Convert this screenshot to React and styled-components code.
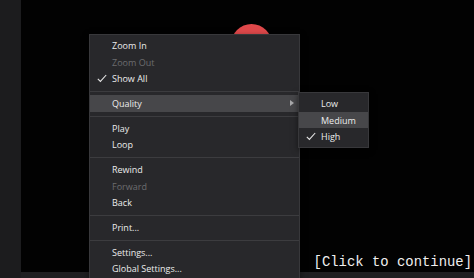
import styled, { createGlobalStyle } from "styled-components"

const GlobalStyle = createGlobalStyle`
  html, body {
    margin: 0;
    padding: 0;
    background: #1c1c1e;
    overflow: hidden;
  }
`

const Screen = styled.div`
  width: 474px;
  height: 278px;
  display: flex;
  position: relative;
  overflow: hidden;
  font-family: "Open Sans", "Noto Sans", sans-serif;
`
const SideStrip = styled.div`
  width: 21px;
  background: #1c1c1e;
`
const Main = styled.div`
  flex: 1;
  display: flex;
  flex-direction: column;
`
const Player = styled.div`
  height: 272px;
  background: #020202;
  position: relative;
  display: flex;
  align-items: flex-end;
  justify-content: flex-end;
  padding: 0 2px 2px 0;
  box-sizing: border-box;
`
const BottomBar = styled.div`
  flex: 1;
  background: #1f1f21;
`
// the sprite on the stage, partly hidden by the menu
const Ball = styled.div`
  position: absolute;
  left: 210px;
  top: 24px;
  width: 41px;
  height: 41px;
  border-radius: 50%;
  background: #e0494b;
`
const Prompt = styled.div`
  font-family: "Liberation Mono", "DejaVu Sans Mono", monospace;
  font-size: 13.9px;
  color: #f0f0f0;
  line-height: 16px;
`

const Menu = styled.div`
  position: absolute;
  left: ${p => p.x}px;
  top: ${p => p.y}px;
  width: ${p => p.w}px;
  background: #28282b;
  border: 1px solid #38383b;
  padding: 2px 0;
  box-sizing: border-box;
  box-shadow: 0 2px 6px rgba(0, 0, 0, 0.5);
`
const Item = styled.div`
  height: 16.7px;
  display: flex;
  align-items: center;
  font-size: 9px;
  color: ${p => (p.disabled ? '#6c6c6f' : '#ececec')};
  background: ${p => (p.active ? '#47474a' : 'transparent')};
`
const CheckSlot = styled.span`
  width: 22px;
  flex-shrink: 0;
  display: flex;
  align-items: center;
  padding-left: 7px;
  box-sizing: border-box;
`
const Label = styled.span`
  flex: 1;
`
const Arrow = styled.span`
  width: 0;
  height: 0;
  margin-right: 5px;
  border-top: 3px solid transparent;
  border-bottom: 3px solid transparent;
  border-left: 4px solid #a8a8aa;
`
const Separator = styled.div`
  height: 1px;
  background: #3c3c3f;
  margin: 4px 0 3px;
`

const Tick = () => (
  <svg width="10" height="9" viewBox="0 0 10 9">
    <path d="M0.8 4.8 L3.4 7.4 L9.2 1" fill="none" stroke="#e6e6e6" strokeWidth="1.1" />
  </svg>
)

const mainMenu = [
  [
    { label: 'Zoom In' },
    { label: 'Zoom Out', disabled: true },
    { label: 'Show All', checked: true },
  ],
  [{ label: 'Quality', active: true, submenu: true }],
  [{ label: 'Play' }, { label: 'Loop' }],
  [{ label: 'Rewind' }, { label: 'Forward', disabled: true }, { label: 'Back' }],
  [{ label: 'Print...' }],
  [{ label: 'Settings...' }, { label: 'Global Settings...' }],
]

const qualityMenu = [
  { label: 'Low' },
  { label: 'Medium', active: true },
  { label: 'High', checked: true },
]

const MenuItem = ({ item }) => (
  <Item disabled={item.disabled} active={item.active}>
    <CheckSlot>{item.checked && <Tick />}</CheckSlot>
    <Label>{item.label}</Label>
    {item.submenu && <Arrow />}
  </Item>
)

const App = () => {
  return (
    <>
      <GlobalStyle />
      <Screen>
        <SideStrip />
        <Main>
          <Player>
            <Ball />
            <Prompt>[Click to continue]</Prompt>
          </Player>
          <BottomBar />
        </Main>

        <Menu x={89} y={34} w={211}>
          {mainMenu.map((group, gi) => (
            <div key={gi}>
              {gi > 0 && <Separator />}
              {group.map(item => (
                <MenuItem key={item.label} item={item} />
              ))}
            </div>
          ))}
        </Menu>

        <Menu x={298} y={92} w={71}>
          {qualityMenu.map(item => (
            <MenuItem key={item.label} item={item} />
          ))}
        </Menu>
      </Screen>
    </>
  )
}

export default App
